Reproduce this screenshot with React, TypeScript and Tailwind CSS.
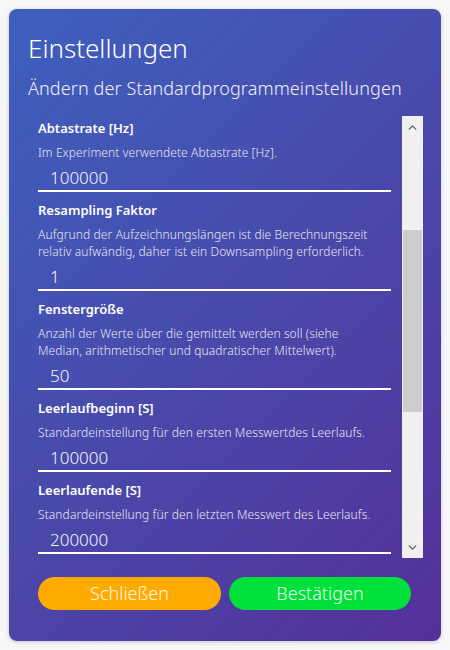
import { ChevronUp, ChevronDown } from "lucide-react";

type Setting = {
	label: string;
	unit?: string;
	description: string;
	value: string;
};

const settings: Setting[] = [
	{ label: "Abtastrate", unit: "[Hz]", description: "Im Experiment verwendete Abtastrate [Hz].", value: "100000" },
	{
		label: "Resampling Faktor",
		description:
			"Aufgrund der Aufzeichnungslängen ist die Berechnungszeit relativ aufwändig, daher ist ein Downsampling erforderlich.",
		value: "1",
	},
	{
		label: "Fenstergröße",
		description:
			"Anzahl der Werte über die gemittelt werden soll (siehe Median, arithmetischer und quadratischer Mittelwert).",
		value: "50",
	},
	{ label: "Leerlaufbeginn", unit: "[S]", description: "Standardeinstellung für den ersten Messwertdes Leerlaufs.", value: "100000" },
	{ label: "Leerlaufende", unit: "[S]", description: "Standardeinstellung für den letzten Messwert des Leerlaufs.", value: "200000" },
];

function SettingRow({ s }: { s: Setting }) {
	return (
		<div className="mb-[9px]">
			<div className="text-[13px] leading-[18px] font-semibold text-white">
				{s.label}
				{s.unit && <span> {s.unit}</span>}
			</div>
			<p className="mt-[7px] pr-4 text-[12px] tracking-[0.1px] leading-[17px] text-[#e6e6f2] font-light">{s.description}</p>
			<div className="pt-[5px] pl-3 text-[17px] leading-6 font-light text-[#f4f4fb] border-b-2 border-white">
				{s.value}
			</div>
		</div>
	);
}

export default function App() {
	return (
		<div className="min-h-[650px] bg-[#f7f7f7] pt-[9px] pl-[9px]" style={{ fontFamily: '"Noto Sans", "Open Sans", sans-serif' }}>
			<div className="w-[432px] h-[632px] rounded-lg shadow-[0_1px_4px_rgba(0,0,0,0.2)] bg-[linear-gradient(135deg,#3e60bf_0%,#4a47a8_55%,#552f9a_100%)] pt-[22px] pl-[19px] pr-[18px] flex flex-col">
				<h1 className="text-[26px] leading-[34px] font-light text-white">Einstellungen</h1>
				<h2 className="mt-[11px] text-[18px] tracking-[0.1px] leading-6 font-light text-[#f0eef8]">
					Ändern der Standardprogrammeinstellungen
				</h2>
				<div className="mt-4 h-[442px] flex">
					<div className="flex-1 overflow-hidden pt-[3px] pl-[10px] pr-[11px]">
						{settings.map((s) => (
							<SettingRow key={s.label} s={s} />
						))}
					</div>
					<div className="w-[21px] bg-[#f0f0f0] flex flex-col items-center">
						<div className="h-[22px] flex items-center justify-center text-[#606060]">
							<ChevronUp size={13} strokeWidth={2.5} />
						</div>
						<div className="mt-[92px] h-[182px] w-[19px] bg-[#cdcdcd]" />
						<div className="flex-1" />
						<div className="h-[22px] flex items-center justify-center text-[#606060]">
							<ChevronDown size={13} strokeWidth={2.5} />
						</div>
					</div>
				</div>
				<div className="mt-[19px] pl-[10px] flex gap-2">
					<button className="w-[183px] h-[33px] rounded-full bg-[#ffaa00] text-[18px] font-light text-[#fff6e6]">
						Schließen
					</button>
					<button className="w-[182px] h-[33px] rounded-full bg-[#00e03a] text-[18px] font-light text-[#eaffea]">
						Bestätigen
					</button>
				</div>
			</div>
		</div>
	);
}
